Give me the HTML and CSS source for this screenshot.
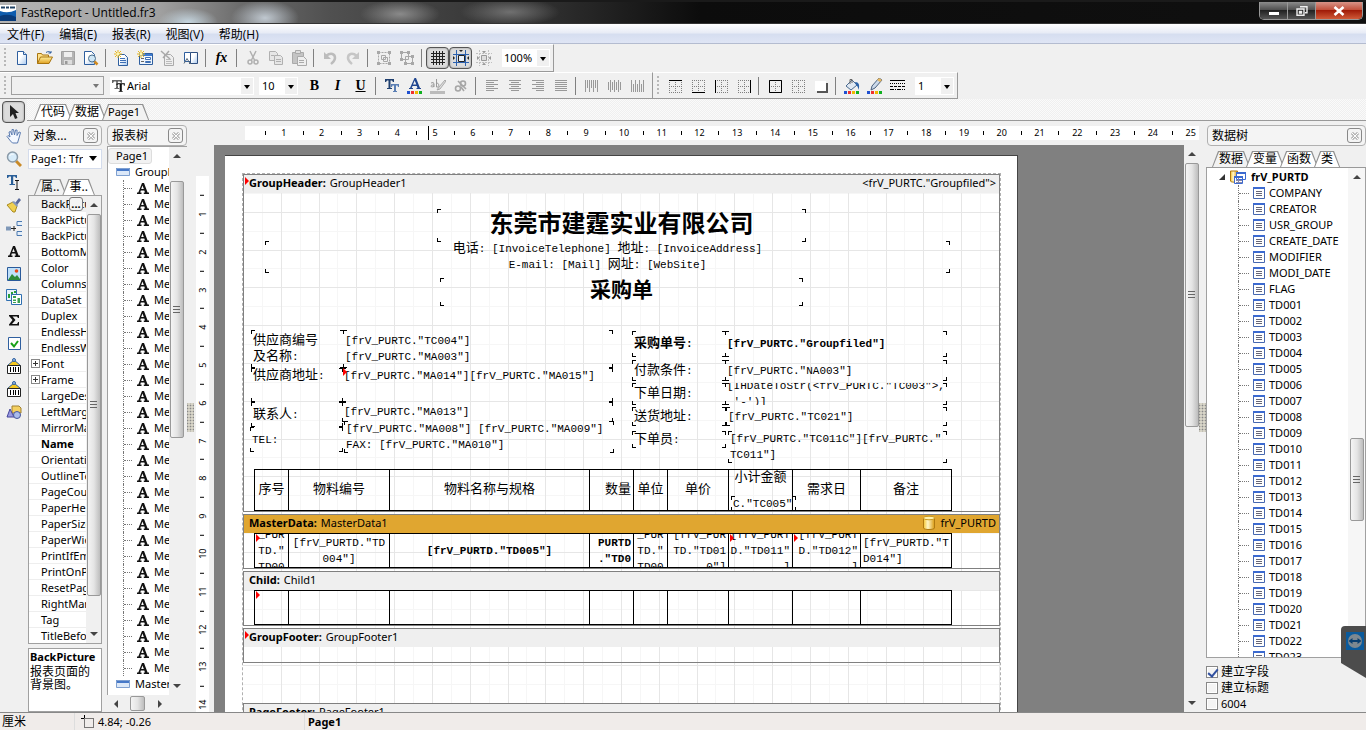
FILE: index.html
```html
<!DOCTYPE html>
<html lang="zh-CN">
  <head>
    <title>FastReport - Untitled.fr3</title>
    <meta charset="UTF-8" />
    <link rel="stylesheet" href="styles.css">
  </head>

  <body>
    <svg class="sprite" aria-hidden="true">
      <defs>
        <linearGradient id="gold" x1="0" y1="0" x2="0" y2="1">
          <stop offset="0" stop-color="#fff0a0" /><stop offset="1" stop-color="#e0a020" />
        </linearGradient>
        <linearGradient id="cyl" x1="0" y1="0" x2="1" y2="0">
          <stop offset="0" stop-color="#f4c430" /><stop offset="0.4" stop-color="#fff6c8" /><stop offset="1" stop-color="#d99a10" />
        </linearGradient>
        <linearGradient id="sheet" x1="0" y1="0" x2="1" y2="1">
          <stop offset="0.4" stop-color="#fff" /><stop offset="1" stop-color="#a8c8ee" />
        </linearGradient>
      </defs>
      <symbol id="i-new" viewBox="0 0 16 16"><path d="M3.500 1.500h6l3 3v10h-9z" fill="url(#sheet)" stroke="#2f5f9f" /><path d="M9.500 1.500v3h3" fill="#dce9f8" stroke="#2f5f9f" /></symbol>
      <symbol id="i-open" viewBox="0 0 16 16"><path d="M.5 13.500v-10h4l1 1.500h6v2" fill="#ffe28a" stroke="#a87410" /><path d="M.5 13.500l3-6.500h12l-3.500 6.500z" fill="url(#gold)" stroke="#a87410" /><path d="M9 2.500c2-1.500 4-1 5 .5v-2M14 3h-2.500" fill="none" stroke="#2f5f9f" /></symbol>
      <symbol id="i-save" viewBox="0 0 16 16"><path d="M1.500 1.500h13v13h-13z" fill="#b4b4b4" stroke="#a0a0a0" /><path d="M4 2h8v5H4z" fill="#eee" /><path d="M4 10h8v4.500H4z" fill="#ddd" /><path d="M5 11h2.500v3H5z" fill="#999" /></symbol>
      <symbol id="i-preview" viewBox="0 0 16 16"><path d="M1.500 1.500h7l3 3v10h-10z" fill="url(#sheet)" stroke="#2f5f9f" /><circle cx="9" cy="8.500" r="3.500" fill="#cfe6f5" stroke="#4c6f8c" /><path d="M11.500 11.500l3 3" stroke="#d08a20" stroke-width="2.500" /></symbol>
      <symbol id="i-addpage" viewBox="0 0 16 16"><path d="M4.500 4.500h6l3 3v8h-9z" fill="url(#sheet)" stroke="#2f5f9f" /><path d="M6 8.500h5M6 10.500h6M6 12.500h6" stroke="#3d6fb5" /><path d="M4 0v8M0 4h8M1 1l6 6M7 1L1 7" stroke="#e8b820" /><circle cx="4" cy="4" r="1.500" fill="#fff6b0" /></symbol>
      <symbol id="i-adddlg" viewBox="0 0 16 16"><path d="M2.500 3.500h13v11h-13z" fill="#eef4fb" stroke="#2f5f9f" /><path d="M3 4h12v2H3z" fill="#3d7bd0" /><path d="M4 8.500h3M4 11.500h3" stroke="#666" /><path d="M8.500 7.500h5v2h-5zM8.500 11.500h5v1h-5z" fill="#fff" stroke="#3d6fb5" /><path d="M4 0v8M0 4h8M1 1l6 6M7 1L1 7" stroke="#e8b820" /><circle cx="4" cy="4" r="1.500" fill="#fff6b0" /></symbol>
      <symbol id="i-delpage" viewBox="0 0 16 16"><path d="M4.500 4.500h6l3 3v8h-9z" fill="#eee" stroke="#aaa" /><path d="M6 9.500h5M6 11.500h6M6 13.500h6" stroke="#bbb" /><path d="M1 1l9 8M9 1L3 8" stroke="#a8a8a8" stroke-width="1.500" /></symbol>
      <symbol id="i-pageset" viewBox="0 0 16 16"><path d="M1.500 2.500h6v9h-6z" fill="#fff" stroke="#2f5f9f" /><path d="M7.500 2.500h7v11h-7z" fill="url(#sheet)" stroke="#2f4f7f" /><path d="M1 13.500l3-5 3 5M8 13.500h-2" fill="none" stroke="#567" /></symbol>
      <symbol id="i-cut" viewBox="0 0 16 16" fill="none" stroke="#b0b0b0" stroke-width="1.500"><path d="M5 1l4.500 9M11 1L6.500 10" /><circle cx="5" cy="12" r="2" /><circle cx="11" cy="12" r="2" /></symbol>
      <symbol id="i-copy" viewBox="0 0 16 16" fill="#e6e6e6" stroke="#b0b0b0"><path d="M1.500 1.500h6l2 2v7h-8z" /><path d="M6.500 5.500h6l2 2v7h-8z" /><path d="M8 9.500h5M8 11.500h5M3 5.500h3" /></symbol>
      <symbol id="i-paste" viewBox="0 0 16 16" fill="#c4c4c4" stroke="#aaa"><path d="M1.500 2.500h11v11h-11z" /><path d="M4.500.5h5v3h-5z" fill="#ddd" /><path d="M6.500 6.500h6l3 3v6h-9z" fill="#eee" /><path d="M8 10.500h5M8 12.500h5" /></symbol>
      <symbol id="i-undo" viewBox="0 0 16 16"><path d="M4 6c5-4 9-2 9 2 0 3-3 5-4 6" fill="none" stroke="#bcbcbc" stroke-width="2.500" /><path d="M2 2v7h7z" fill="#bcbcbc" /></symbol>
      <symbol id="i-redo" viewBox="0 0 16 16"><path d="M12 6C7 2 3 4 3 8c0 3 3 5 4 6" fill="none" stroke="#c6c6c6" stroke-width="2.500" /><path d="M14 2v7H7z" fill="#c6c6c6" /></symbol>
      <symbol id="i-group" viewBox="0 0 16 16" fill="none" stroke="#a8a8a8"><path d="M2.500 2.500h11v11h-11z" stroke-dasharray="2 1" /><path d="M5.500 5.500h4v4h-4zM7.500 7.500h4v4h-4z" /><path d="M1 1h3v3H1zM12 1h3v3h-3zM1 12h3v3H1zM12 12h3v3h-3z" fill="#a8a8a8" stroke="none" /></symbol>
      <symbol id="i-ungroup" viewBox="0 0 16 16" fill="none" stroke="#a8a8a8"><path d="M2.500 2.500h7v7h-7zM6.500 6.500h7v7h-7z" /><path d="M1 1h3v3H1zM8 1h3v3H8zM1 8h3v3H1zM12 5h3v3h-3zM5 12h3v3H5zM12 12h3v3h-3z" fill="#a8a8a8" stroke="none" /></symbol>
      <symbol id="i-grid" viewBox="0 0 16 16"><path d="M3.500 1v14M6.500 1v14M9.500 1v14M12.500 1v14M1 3.500h14M1 6.500h14M1 9.500h14M1 12.500h14" stroke="#222" /></symbol>
      <symbol id="i-snap" viewBox="0 0 16 16"><path d="M3.500 0v16M12.500 0v16M0 4.500h16M0 12.500h16" stroke="#2d62b0" /><path d="M5.500 5.500h6v6h-6z" fill="#e8f0fa" stroke="#222" /><path d="M6 0h4L8 2zM0 6v4l2-2zM16 6v4l-2-2z" fill="#222" /></symbol>
      <symbol id="i-fit" viewBox="0 0 16 16"><path d="M3.500 0v16M12.500 0v16M0 3.500h16M0 12.500h16" stroke="#c0c0c0" stroke-dasharray="2 1" /><path d="M5.500 5.500h5v5h-5z" fill="#ddd" stroke="#999" /><path d="M6 1h4L8 3.500zM6 15h4l-2-2.500zM1 6v4l2.500-2zM15 6v4l-2.500-2z" fill="#999" /></symbol>
      <symbol id="i-tt" viewBox="0 0 16 16"><path d="M1 2h10v3h-1l-1-1.500H7V10H8.500v1h-5v-1H5V3.500H3L2 5H1z" fill="#666" /><path d="M5 5h9v3h-1l-.5-1.500H11V13h1v1H7.500v-1h1V6.500H7L6 8H5z" fill="#111" stroke="#fff" stroke-width=".4" /></symbol>
      <symbol id="i-ttb" viewBox="0 0 16 16"><path d="M1 1h9v3H9L8 2.500H6.500V10H8v1H3v-1h1.500V2.500H3L2 4H1z" fill="#1f3f6f" /><path d="M7 6h8v3h-1l-.5-1.500H12V13h1v1H9v-1h1V7.500H8.500L8 9H7z" fill="#5b7fb4" /></symbol>
      <symbol id="i-colors" viewBox="0 0 16 4"><path d="M0 0h3v3H0z" fill="#2050d0" /><path d="M4 0h3v3H4z" fill="#f03030" /><path d="M8 0h3v3H8z" fill="#f0b800" /><path d="M12 0h3v3h-3z" fill="#10b020" /></symbol>
      <symbol id="i-fontcolor" viewBox="0 0 16 16"><path d="M7.500 0h1.500l4 10h1v1H9.500v-1h1L9.800 8H5.500l-.8 2H6v1H2v-1h1zM6 6.500h3.300L7.700 2.500z" fill="#1f4590" /><use href="#i-colors" x="0" y="13" width="16" height="4" /></symbol>
      <symbol id="i-hilite" viewBox="0 0 16 16"><path d="M0 13h15v3H0z" fill="#bbb" /><path d="M15 2l-6 7-2 3 3-1 6-8z" fill="#ddd" stroke="#aaa" /><path d="M1 5q3-1.500 3 1v3M4 7c-4-.5-4 3 0 1.500M6.500 1v8c3 1 3-5 0-3.500" fill="none" stroke="#999" /></symbol>
      <symbol id="i-rotate" viewBox="0 0 16 16" fill="none" stroke="#a6a6a6" stroke-width="1.600"><circle cx="5" cy="10.500" r="2.500" /><circle cx="10" cy="5.500" r="2.500" /><path d="M5 3l8 8M8 9l3 4" /></symbol>
      <symbol id="i-al" viewBox="0 0 16 16"><path d="M2 2.500h12M2 4.500h8M2 6.500h12M2 8.500h8M2 10.500h12M2 12.500h8" stroke="#999" /></symbol>
      <symbol id="i-ac" viewBox="0 0 16 16"><path d="M2 2.500h12M4 4.500h8M2 6.500h12M4 8.500h8M2 10.500h12M4 12.500h8" stroke="#999" /></symbol>
      <symbol id="i-ar" viewBox="0 0 16 16"><path d="M2 2.500h12M6 4.500h8M2 6.500h12M6 8.500h8M2 10.500h12M6 12.500h8" stroke="#999" /></symbol>
      <symbol id="i-aj" viewBox="0 0 16 16"><path d="M2 2.500h12M2 4.500h12M2 6.500h12M2 8.500h12M2 10.500h12M2 12.500h12" stroke="#999" /></symbol>
      <symbol id="i-vt" viewBox="0 0 16 16"><path d="M1.500 2v12M3.500 2v8M5.500 2v12M7.500 2v8M9.500 2v12M11.500 2v8M13.500 2v12" stroke="#999" /></symbol>
      <symbol id="i-vc" viewBox="0 0 16 16"><path d="M1.500 4v8M3.500 2v12M5.500 4v8M7.500 2v12M9.500 4v8M11.500 2v12M13.500 4v8" stroke="#999" /></symbol>
      <symbol id="i-vb" viewBox="0 0 16 16"><path d="M1.500 2v12M3.500 6v8M5.500 2v12M7.500 6v8M9.500 2v12M11.500 6v8M13.500 2v12" stroke="#999" /></symbol>
      <symbol id="i-dots" viewBox="0 0 16 16"><path d="M2 2.500h13M2 8.500h13M2 14.500h13M2.500 2v13M8.500 2v13M14.500 2v13" stroke="#808080" stroke-dasharray="1 1" /></symbol>
      <symbol id="i-ft" viewBox="0 0 16 16"><use href="#i-dots" width="16" height="16" /><path d="M2 2.500h13" stroke="#000" /></symbol>
      <symbol id="i-fb" viewBox="0 0 16 16"><use href="#i-dots" width="16" height="16" /><path d="M2 14.500h13" stroke="#000" /></symbol>
      <symbol id="i-fl" viewBox="0 0 16 16"><use href="#i-dots" width="16" height="16" /><path d="M2.500 2v13" stroke="#000" /></symbol>
      <symbol id="i-fr" viewBox="0 0 16 16"><use href="#i-dots" width="16" height="16" /><path d="M14.500 2v13" stroke="#000" /></symbol>
      <symbol id="i-fa" viewBox="0 0 16 16"><use href="#i-dots" width="16" height="16" /><path d="M2.500 2.500h12v12h-12z" fill="none" stroke="#000" /></symbol>
      <symbol id="i-shadow" viewBox="0 0 16 16"><path d="M4 5h11v10H4z" fill="#555" /><path d="M2 3h11v10H2z" fill="#fff" /></symbol>
      <symbol id="i-fill" viewBox="0 0 16 16"><path d="M2 8l6-6 5 5-6 5z" fill="#dfe8f2" stroke="#4a6a90" /><path d="M6 6V1.500h2V5" fill="none" stroke="#666" /><path d="M11 4c4 0 5 3 3.500 8C14 8 13 8 12 7z" fill="#2b62a8" /><use href="#i-colors" x="0" y="13" width="16" height="4" /></symbol>
      <symbol id="i-pen" viewBox="0 0 16 16"><path d="M12 0l3 2-7 8-4 2 1-4z" fill="#cbd9ea" stroke="#4a6080" /><path d="M12 0l3 2-2 2-3-2z" fill="#e8b860" /><use href="#i-colors" x="0" y="13" width="16" height="4" /></symbol>
      <symbol id="i-style" viewBox="0 0 16 16"><path d="M0 2.500h15" stroke="#000" /><path d="M0 5.500h15" stroke="#000" stroke-dasharray="1 1" /><path d="M0 8.500h15" stroke="#000" stroke-dasharray="3 1" /><path d="M0 11.500h15" stroke="#000" stroke-dasharray="4 1 1 1" /></symbol>
      <symbol id="i-arrow" viewBox="0 0 16 16"><path d="M4 1v12l3-3 2 5 2.500-1-2-5H13z" fill="#222" /></symbol>
      <symbol id="i-hand" viewBox="0 0 16 16"><path d="M4.500 13L1 8.500l1-1 2 1.500L3 4l1.500-.5L6 7V1.500h1.500L8.500 7l1-5L11 2v5.500l2-3.500 1.500.5L13 10l-1.500 5h-5z" fill="#f4f8ff" stroke="#5b7bb0" /></symbol>
      <symbol id="i-zoom" viewBox="0 0 16 16"><path d="M10 10l5 5" stroke="#c98a28" stroke-width="3" /><circle cx="6.500" cy="6" r="5" fill="#d8ecfa" stroke="#8a9aa8" stroke-width="1.500" /><path d="M3.500 5c1-2 3-2 4-1.500" stroke="#fff" fill="none" /></symbol>
      <symbol id="i-text" viewBox="0 0 16 16"><path d="M1 1h10v3h-1L9 2.500H7.200V10H9v1H3.500v-1H5V2.500H3L2 4H1z" fill="#2a5f98" /><path d="M9 6.500h4M11 7v8M9 15.500h4" stroke="#111" /></symbol>
      <symbol id="i-brush" viewBox="0 0 16 16"><path d="M9 6l4-5 2 2-4 5z" fill="#5a6a9a" /><path d="M1 8l6-3 4 4-2 6H7z" fill="#f0d050" stroke="#a88a20" /><path d="M6 5l2-1 4 4-1 2z" fill="#8898b8" /></symbol>
      <symbol id="i-link" viewBox="0 0 16 16"><path d="M0 6.500h5v4H0z" fill="#7f98b8" /><path d="M5 8.500h5M8 6v5" stroke="#222" /><path d="M16 1.500h-5v4h5M16 11.500h-5v4h5" fill="#e4eef8" stroke="#4a78b0" /></symbol>
      <symbol id="i-a" viewBox="0 0 16 16"><path d="M7 3h2l3.600 9.500H14V14H8.800v-1.500H10L9.300 10.500H5.800l-.6 2H6.500V14H2v-1.500h1.300zM6.200 9h2.600L7.500 5.500z" fill="#111" /></symbol>
      <symbol id="i-pic" viewBox="0 0 16 16"><path d="M1.500 1.500h13v13h-13z" fill="#bfe0fa" stroke="#2a5a9a" /><path d="M2 14l4-6 3 3 2-2 3 4v1z" fill="#2e8b3a" /><circle cx="10.500" cy="5" r="1.800" fill="#e84818" /></symbol>
      <symbol id="i-sub" viewBox="0 0 16 16"><path d="M.5.500h10v11H.5z" fill="#e8f2fc" stroke="#2f6fb0" /><path d="M2 5h2v4H2zM5 3h2v6H5zM8 2h2v2H8z" fill="#28a038" /><path d="M5.500 5.500h10v10h-10z" fill="#fff" stroke="#2f6fb0" /><path d="M7 7h3v2H7zM7 10.500h3v1.500H7zM7 13h3v1H7zM11.500 9h2.500v5h-2.500z" fill="#3ca050" /></symbol>
      <symbol id="i-sigma" viewBox="0 0 16 16"><path d="M3 3h10v3h-1l-1-1.500H6.500L9.500 8l-3.500 4h5l1.200-2H13v3.500H3V12.500L6.500 8 3 4z" fill="#111" /></symbol>
      <symbol id="i-check" viewBox="0 0 16 16"><path d="M2.500 2.500h12v12h-12z" fill="#fff" stroke="#2f5f9f" /><path d="M5 8l3 3.500L12 6" fill="none" stroke="#18a018" stroke-width="2" /></symbol>
      <symbol id="i-bar" viewBox="0 0 16 16"><path d="M1.500 7.500L8 2l6.500 5.500z" fill="#f5c820" stroke="#2f5f9f" /><path d="M1.500 7.500h13v8h-13z" fill="#fff" stroke="#222" /><path d="M4.500 9v5M7.500 9v5M9.500 9v5M12.500 9v5" stroke="#000" /><circle cx="8" cy="2" r="1.500" fill="#9cc0ea" stroke="#2f5f9f" /></symbol>
      <symbol id="i-shapes" viewBox="0 0 16 16"><path d="M6 2h7l2 2v5H6z" fill="#f4d060" stroke="#a08030" /><path d="M1 13l3-8 4 8z" fill="#9a9ae0" stroke="#44449a" /><circle cx="11" cy="11" r="3.500" fill="#aabcec" stroke="#44559a" /></symbol>
      <symbol id="i-band" viewBox="0 0 16 16"><path d="M1 4h14v8H1z" fill="#dce8f8" /><path d="M1 4h14v3H1z" fill="#4678c8" /><path d="M1.500 4.500h13v7h-13z" fill="none" stroke="#7fa0d0" /></symbol>
      <symbol id="i-field" viewBox="0 0 16 16"><path d="M2.500 2.500h11v11h-11z" fill="#fff" stroke="#4668b0" /><path d="M2 2h12v2H2z" fill="#3c6ad0" /><path d="M5 6.500h6M5 8.500h6M5 10.500h6" stroke="#667" /></symbol>
      <symbol id="i-db" viewBox="0 0 16 16"><path d="M2.500 3v10c0 2 11 2 11 0V3z" fill="url(#cyl)" stroke="#b07a10" /><ellipse cx="8" cy="3" rx="5.500" ry="1.800" fill="#fff2b0" stroke="#c89a20" /></symbol>
      <symbol id="i-dataset" viewBox="0 0 16 16"><path d="M.5 2v10c0 1.500 7 1.500 7 0V2z" fill="url(#cyl)" stroke="#b07a10" /><path d="M6.500 3.500h9v7h-9zM4.500 7.500h8v7h-8z" fill="#fff" stroke="#3c6ad0" /><path d="M6 3h10v2H6zM4 7h9v2H4z" fill="#3c6ad0" /><path d="M6 11.500h6M6 13.500h6M8.500 9v5" stroke="#88a" /></symbol>
      <symbol id="i-pos" viewBox="0 0 16 16"><path d="M4.500 4.500h9v9h-9z" fill="none" stroke="#000" stroke-dasharray="1 1" /><path d="M4.500 1v3M1 4.500h3" stroke="#000" /></symbol>
      <symbol id="i-close" viewBox="0 0 16 16"><path d="M4 4l8 8M12 4l-8 8" stroke="#888" stroke-width="3.500" /><path d="M4 4l8 8M12 4l-8 8" stroke="#fff" stroke-width="1.500" /></symbol>
    </svg>

    <header class="titleBar">
      <svg class="appIcon" viewBox="0 0 16 16"><path d="M0 0h16v16H0z" fill="#fff" /><path d="M0 6q8 3 16-1v11H0z" fill="#0e5cae" /><path d="M0 11q8-3 16 1v4H0z" fill="#093a78" /><path d="M1 2.500h4M6 2.500h3M10 2.500h5" stroke="#246" stroke-width="2" /></svg>
      <h1>FastReport - Untitled.fr3</h1>
      <div class="winButtons">
        <button class="minimize" aria-label="Minimize"><svg viewBox="0 0 12 10"><path d="M1 6h10v3H1z" fill="#fff" /></svg></button>
        <button class="restore" aria-label="Restore"><svg viewBox="0 0 12 10"><path d="M4 .8h7v6H9M1 3h7v6.200H1zM3.500 5.500h2v1.500h-2z" fill="none" stroke="#eee" stroke-width="1.400" /></svg></button>
        <button class="closeWin" aria-label="Close"><svg viewBox="0 0 12 10"><path d="M1.500 1l9 8M10.500 1l-9 8" stroke="#fff" stroke-width="2.600" /></svg></button>
      </div>
    </header>

    <nav class="menuBar">
      <button>文件(F)</button>
      <button>编辑(E)</button>
      <button>报表(R)</button>
      <button>视图(V)</button>
      <button>帮助(H)</button>
    </nav>

    <div class="toolRows">
      <div class="toolRow">
        <div class="toolBar" data-icons="new open save preview | addpage adddlg delpage pageset | fx | cut copy paste | undo redo | group ungroup | grid* snap* fit">
          <label class="combo zoomBox"><select aria-label="Zoom"><option>100%</option></select></label>
        </div>
      </div>
      <div class="toolRow">
        <div class="toolBar textBar">
          <label class="combo styleBox"><select aria-label="Style" disabled><option></option></select></label>
          <label class="combo font"><svg><use href="#i-tt" /></svg><select aria-label="Font"><option>Arial</option></select></label>
          <label class="combo size"><select aria-label="Size"><option>10</option></select></label>
          <div class="icons" data-icons="bold italic underline | ttb fontcolor hilite rotate | al ac ar aj | vt vc vb"></div>
        </div>
        <div class="toolBar" data-icons="ft fb fl fr | fa dots shadow | fill pen style">
          <label class="combo size"><select aria-label="Line width"><option>1</option></select></label>
        </div>
      </div>
    </div>

    <div class="workspace">
      <div class="objectBar" data-icons="arrow* hand zoom text brush link a pic sub sigma check bar bar shapes"></div>

      <div class="main">
        <div class="tabs pageTabs">
          <button class="tab">代码</button>
          <button class="tab">数据</button>
          <button class="tab active">Page1</button>
        </div>

        <div class="panels">
          <section class="panel inspector">
            <h2>对象...<button class="closePanel" aria-label="Close"><svg><use href="#i-close" /></svg></button></h2>
            <label class="combo object"><select aria-label="Object"><option>Page1: TfrxReportPage</option></select></label>
            <div class="tabs">
              <button class="tab active">属..</button>
              <button class="tab">事..</button>
            </div>
            <div class="listBox">
              <ul class="props"></ul>
              <div class="scroll"><i class="up"></i><i class="thumb"></i><i class="down"></i></div>
            </div>
            <div class="hint"><b>BackPicture</b><p>报表页面的背景图。</p></div>
          </section>

          <section class="panel reportTree">
            <h2>报表树<button class="closePanel" aria-label="Close"><svg><use href="#i-close" /></svg></button></h2>
            <div class="listBox">
              <ul class="tree"></ul>
              <div class="scroll"><i class="up"></i><i class="thumb"></i><i class="down"></i></div>
            </div>
            <div class="scroll across"><i class="left"></i><i class="thumb"></i><i class="right"></i></div>
          </section>

          <div class="splitter"></div>

          <section class="designer">
            <div class="ruler hRuler"><i class="mark"></i></div>
            <div class="designRow">
              <div class="ruler vRuler"></div>
              <div class="canvas">
                <div class="page">
                  <div class="pageBody">
                    <svg class="pageGrid"></svg>
                    <div class="band groupHeader"><h3><b>GroupHeader:</b> GroupHeader1<span>&lt;frV_PURTC."Groupfiled"&gt;</span></h3></div>
                    <div class="band masterData"><h3><b>MasterData:</b> MasterData1<span><svg><use href="#i-db" /></svg>frV_PURTD</span></h3></div>
                    <div class="band child"><h3><b>Child:</b> Child1</h3></div>
                    <div class="band groupFooter"><h3><b>GroupFooter:</b> GroupFooter1</h3></div>
                    <div class="band pageFooter"><h3><b>PageFooter:</b> PageFooter1</h3></div>
                  </div>
                </div>
              </div>
              <div class="scroll"><i class="up"></i><i class="thumb"></i><i class="down"></i></div>
            </div>
          </section>

          <div class="splitter"></div>

          <section class="panel dataTree">
            <h2>数据树<button class="closePanel" aria-label="Close"><svg><use href="#i-close" /></svg></button></h2>
            <div class="tabs">
              <button class="tab active">数据</button>
              <button class="tab">变量</button>
              <button class="tab">函数</button>
              <button class="tab">类</button>
            </div>
            <div class="listBox">
              <ul class="tree fields"></ul>
              <div class="scroll"><i class="up"></i><i class="thumb"></i><i class="down"></i></div>
            </div>
            <div class="options">
              <label><input type="checkbox" checked>建立字段</label>
              <label><input type="checkbox">建立标题</label>
              <label><input type="checkbox">6004</label>
            </div>
            <div class="sideBadge"><svg viewBox="0 0 18 18"><path d="M0 0h18v18H0z" fill="#0a5a9c" /><circle cx="9" cy="9" r="7" fill="#7d8890" /><path d="M2.500 9l4-3v2h5V6l4 3-4 3v-2h-5v2z" fill="#0a3f70" /></svg></div>
          </section>
        </div>
      </div>
    </div>

    <footer class="statusBar">
      <span class="unit">厘米</span>
      <span class="pos"><svg><use href="#i-pos" /></svg>4.84; -0.26</span>
      <b>Page1</b>
    </footer>

    <script src="script.js"></script>
  </body>
</html>
```
FILE: styles.css
```css
* {
  box-sizing: border-box;
  margin: 0;
  padding: 0;
}

body {
  display: flex;
  flex-direction: column;
  height: 100vh;
  overflow: hidden;
  background: #f0f0f0;
  color: #000;
  font-family: "Noto Sans", "Noto Sans CJK SC", sans-serif;
  font-size: 11px;
  line-height: 16px;
}

button,
select,
input {
  font: inherit;
  color: inherit;
}

button {
  border: none;
  background: none;
}

ul {
  list-style: none;
}

svg {
  display: block;
  flex: none;
  width: 16px;
  height: 16px;
}

.sprite {
  position: absolute;
  width: 0;
  height: 0;
}

/* title and menu */

.titleBar {
  display: flex;
  align-items: center;
  flex: none;
  height: 24px;
  border-top: 2px solid #1a1a1a;
  border-bottom: 1px solid #333;
  background:
    radial-gradient(ellipse 30px 14px at 188px 20px, #c4d4de, transparent),
    radial-gradient(ellipse 34px 18px at 265px 16px, #c0c8d0, transparent),
    radial-gradient(ellipse 40px 14px at 400px 12px, #8a8a8a, transparent),
    radial-gradient(ellipse 50px 14px at 510px 10px, #707070, transparent),
    linear-gradient(to right, #b4b4b4 0, #a0a0a0 160px, #6c6c6c 240px, #505050 330px, #2c2c2c 560px, #0c0c0c 700px, #101010 100%);
}

.titleBar h1 {
  flex: 1;
  margin-left: 5px;
  font-size: 12px;
  font-weight: normal;
  font-family: "Open Sans", sans-serif;
}

.winButtons {
  display: flex;
  align-self: flex-start;
  height: 18px;
  margin-right: 3px;
  border: 1px solid #999;
  border-top: none;
  border-radius: 0 0 5px 5px;
  overflow: hidden;
}

.winButtons button {
  display: flex;
  align-items: center;
  justify-content: center;
  width: 28px;
  border-right: 1px solid #999;
  background: linear-gradient(#8c8c8c, #4a4a4a 50%, #222 50%, #555);
}

.winButtons svg {
  width: 12px;
  height: 10px;
}

.winButtons .closeWin {
  width: 46px;
  border-right: none;
  background: linear-gradient(#d89488, #c04a34 50%, #a01c08 50%, #d05a38);
}

.menuBar {
  display: flex;
  flex: none;
  height: 20px;
  gap: 15px;
  padding: 2px 0 0 7px;
  border-bottom: 1px solid #b4bcd0;
  background: linear-gradient(#fff, #e8ecf6 45%, #d6def0 55%, #dfe5f5);
  font-family: "Open Sans", "Noto Sans CJK SC", sans-serif;
  font-size: 12px;
}

/* tool bars */

.toolRows {
  flex: none;
}

.toolRow {
  display: flex;
  height: 27px;
}

.toolRow:first-child {
  height: 28px;
}

.toolBar {
  display: flex;
  align-items: center;
  padding: 0 3px 0 10px;
  border-top: 1px solid #fff;
  border-right: 1px solid #999;
  border-bottom: 1px solid #999;
  position: relative;
}

.toolBar::before {
  content: "";
  position: absolute;
  left: 4px;
  top: 3px;
  bottom: 3px;
  width: 2px;
  background: repeating-linear-gradient(#b8b8b8 0 2px, transparent 2px 4px);
}

.icons {
  display: flex;
  align-items: center;
}

.tool {
  display: flex;
  align-items: center;
  justify-content: center;
  flex: none;
  width: 23px;
  height: 22px;
  font: bold 14px/20px "Liberation Serif", serif;
}

.tool.pressed {
  border: 1px solid #555;
  border-radius: 4px;
  background: #dcdcdc;
  box-shadow: inset 0 0 2px #888;
}

.tool.slanted {
  font-style: italic;
}

.tool.underlined {
  text-decoration: underline;
}

.sep {
  flex: none;
  width: 1px;
  height: 18px;
  margin: 0 4px 0 3px;
  background: #808080;
}

.combo {
  display: flex;
  align-items: center;
  position: relative;
  height: 18px;
  background: #fff;
}

.combo select {
  flex: 1;
  min-width: 0;
  height: 18px;
  padding: 0 12px 0 3px;
  border: none;
  background: none;
  appearance: none;
}

.combo::after {
  content: "";
  position: absolute;
  right: 4px;
  top: 8px;
  border: 3px solid transparent;
  border-top: 4px solid #000;
  border-bottom: none;
}

.toolBar .combo::before {
  content: "";
  position: absolute;
  right: 1px;
  top: 1px;
  bottom: 1px;
  width: 12px;
  background: #f0f0f0;
}

.combo.zoomBox {
  width: 48px;
  margin-left: 7px;
}

.combo.zoomBox select {
  padding-left: 2px;
}

.combo.styleBox {
  width: 93px;
  height: 19px;
  margin-left: 1px;
  border: 1px solid #a0a0a0;
  background: #f0f0f0;
}

.combo.styleBox::after {
  top: 7px;
  border-top-color: #777;
}

.combo.font {
  width: 144px;
  margin: 0 5px 0 6px;
  padding-left: 1px;
}

.combo.font select {
  padding-left: 0;
}

.combo.size {
  width: 39px;
  margin-right: 5px;
}

.combo.size:last-child {
  margin: 0 0 0 6px;
}

/* workspace */

.workspace {
  display: flex;
  flex: 1;
  min-height: 0;
}

.objectBar {
  flex: none;
  width: 27px;
  padding: 2px 2px 0;
}

.objectBar .tool {
  height: 23px;
}

.objectBar .tool.pressed {
  height: 22px;
  margin-bottom: 1px;
}

.main {
  display: flex;
  flex-direction: column;
  flex: 1;
  min-width: 0;
}

.tabs {
  display: flex;
  align-items: flex-end;
  flex: none;
  height: 17px;
  padding-left: 6px;
  border-bottom: 1px solid #999;
  font-size: 12px;
}

.pageTabs {
  height: 22px;
  padding-left: 7px;
  background: repeating-conic-gradient(#efefef 0 25%, #fafafa 0 50%) 0 0 / 2px 2px;
}

.tab {
  flex: none;
  position: relative;
  isolation: isolate;
  height: 16px;
  margin-right: -4px;
  padding: 0 7px;
  background: #909090;
  clip-path: polygon(0 100%, 6px 0, calc(100% - 6px) 0, 100% 100%);
  line-height: 16px;
}

.tab::before {
  content: "";
  position: absolute;
  inset: 1px 1px 0;
  z-index: -1;
  background: #fff;
  clip-path: polygon(0 100%, 6px 0, calc(100% - 6px) 0, 100% 100%);
}

.tab.active::before {
  background: #f2f2f2;
}

.pageTabs .active {
  padding: 0 9px 0 6px;
  font-size: 11px;
}

.panels {
  display: grid;
  grid-template-columns: 75px 85px 7px 1fr 7px 160px;
  grid-template-rows: minmax(0, 1fr);
  flex: 1;
  min-height: 0;
}

.panel {
  display: flex;
  flex-direction: column;
  min-width: 0;
  min-height: 0;
  padding-top: 4px;
}

.panel h2 {
  display: flex;
  align-items: center;
  justify-content: space-between;
  flex: none;
  height: 21px;
  padding: 0 3px 0 4px;
  border: 1px solid #b0b0b0;
  border-radius: 4px;
  background: #f4f4f4;
  font-size: 12px;
  font-weight: normal;
}

.closePanel {
  display: flex;
  align-items: center;
  justify-content: center;
  width: 15px;
  height: 15px;
  border: 1px solid #888;
  border-radius: 3px;
}

.closePanel svg {
  width: 12px;
  height: 12px;
}

.listBox {
  display: flex;
  flex: 1;
  min-height: 0;
  overflow: hidden;
  border: 1px solid #a0a0a0;
  background: #fff;
}

.listBox ul {
  flex: 1;
  min-width: 0;
  overflow: hidden;
}

/* scroll bars */

.scroll {
  display: flex;
  flex-direction: column;
  align-items: center;
  flex: none;
  width: 15px;
  padding: 7px 0;
  background: #f0f0f0;
}

.scroll i {
  flex: none;
}

.up,
.down {
  border: 4px solid transparent;
}

.up {
  border-top: none;
  border-bottom: 4px solid #444;
}

.down {
  margin-top: auto;
  border-bottom: none;
  border-top: 4px solid #444;
}

.thumb {
  display: flex;
  align-items: center;
  justify-content: center;
  width: 14px;
  height: 382px;
  margin-top: 7px;
  border: 1px solid #999;
  border-radius: 2px;
  background: linear-gradient(to right, #f4f4f4, #e4e4e4 50%, #bdbdbd);
}

.thumb::before {
  content: "";
  width: 7px;
  height: 8px;
  background: repeating-linear-gradient(#666 0 1px, transparent 1px 3px);
}

.scroll.across {
  flex-direction: row;
  width: 62px;
  height: 17px;
  padding: 0 7px;
}

.left,
.right {
  border: 4px solid transparent;
}

.left {
  border-left: none;
  border-right: 4px solid #444;
}

.right {
  margin-left: auto;
  border-right: none;
  border-left: 4px solid #444;
}

.across .thumb {
  width: 15px;
  height: 15px;
  margin: 0 0 0 12px;
}

.across .thumb::before {
  display: none;
}

/* object inspector */

.inspector {
  padding-left: 1px;
}

.combo.object {
  flex: none;
  height: 20px;
  margin: 3px 0 9px;
  border: 1px solid #d4dcec;
}

.combo.object select {
  padding: 0 18px 0 2px;
  text-overflow: clip;
}

.combo.object::after {
  top: 6px;
  border-width: 5px 4px 0;
}

.inspector .listBox {
  flex: 0 1 449px;
}

.inspector .tabs {
  border-bottom: none;
}

.props li {
  display: flex;
  align-items: center;
  position: relative;
  height: 16px;
  padding-left: 12px;
  border-bottom: 1px solid #eee;
  white-space: nowrap;
  line-height: 15px;
}

.props .selected {
  background: #f0f0f0;
}

.props .set {
  font-weight: bold;
}

.props .dots {
  position: absolute;
  right: 3px;
  top: 1px;
  width: 14px;
  height: 14px;
  border: 1px solid #777;
  border-radius: 3px;
  background: #f4f4f4;
  font-weight: bold;
  line-height: 8px;
}

.plus {
  position: absolute;
  left: 2px;
  width: 9px;
  height: 9px;
  border: 1px solid #888;
  background:
    linear-gradient(#333 0 0) center / 5px 1px no-repeat,
    linear-gradient(#333 0 0) center / 1px 5px no-repeat;
}

.hint {
  flex: 1;
  margin-top: 4px;
  padding: 0 1px;
  border: 1px solid #a0a0a0;
  background: #fff;
}

.hint p {
  width: 64px;
  font-size: 12px;
  line-height: 13px;
}

/* trees */

.tree {
  padding-top: 1px;
}

.tree li {
  display: flex;
  align-items: center;
  height: 16px;
  white-space: nowrap;
}

.reportTree {
  margin-left: 5px;
}

.reportTree .listBox {
  border-right: none;
  border-bottom: none;
}

.reportTree .listBox .scroll {
  width: 18px;
  padding-right: 3px;
}

.reportTree .tree .root {
  width: 44px;
  padding-left: 7px;
  border: 1px solid #ddd;
  border-radius: 3px;
  background: #f2f2f2;
}

.tree .group {
  gap: 4px;
  padding-left: 7px;
}

.tree .leaf {
  gap: 3px;
  margin-left: 15px;
  border-left: 1px dotted #777;
}

.tree .leaf::before {
  content: "";
  flex: none;
  width: 8px;
  border-top: 1px dotted #777;
}

.fields .group {
  gap: 5px;
  padding-left: 12px;
  font-weight: bold;
}

.fields .leaf {
  gap: 2px;
  margin-left: 31px;
}

.fields .leaf::before {
  width: 10px;
}

.twist {
  border-left: 6px solid transparent;
  border-bottom: 6px solid #333;
}

.reportTree .listBox .thumb {
  height: 257px;
  margin-top: 23px;
}

.splitter {
  align-self: start;
  height: 29px;
  margin-top: 282px;
  background: radial-gradient(circle, #888 40%, transparent 50%) center / 3px 3px, #d8d5c8;
}

.dataTree {
  position: relative;
}

.dataTree h2 {
  margin-left: 1px;
}

.dataTree .tabs {
  margin-top: 5px;
}

.dataTree .listBox {
  border-top: none;
}

.dataTree .scroll {
  width: 17px;
  background: #f6f6f6;
}

.dataTree .thumb {
  height: 83px;
  margin-top: 259px;
}

.options {
  flex: none;
  padding-top: 6px;
}

.options label {
  display: flex;
  align-items: center;
  gap: 3px;
  height: 16px;
  font-size: 12px;
}

.options input {
  appearance: none;
  width: 12px;
  height: 12px;
  border: 1px solid #888;
  background: #f4f4f4;
  box-shadow: inset 0 0 0 1px #fff;
}

.options input:checked::before {
  content: "";
  display: block;
  width: 4px;
  height: 8px;
  margin: 0 3px;
  border: solid #3050a0;
  border-width: 0 2px 2px 0;
  transform: rotate(40deg);
}

.options label:last-child {
  font-size: 11px;
}

.sideBadge {
  position: absolute;
  right: 0;
  bottom: 34px;
  width: 25px;
  height: 52px;
  padding: 6px 0 0 5px;
  border-radius: 4px 0 0 0;
  background: #4c4c4c;
  clip-path: polygon(0 0, 100% 0, 100% 100%, 0 37px);
}

.sideBadge svg {
  width: 18px;
  height: 18px;
}

/* designer */

.designer {
  display: flex;
  flex-direction: column;
  min-width: 0;
  min-height: 0;
  padding-top: 5px;
}

.ruler {
  display: flex;
  flex: none;
  overflow: hidden;
  background: #fff;
  font-size: 9px;
}

.ruler span {
  flex: none;
  text-align: center;
}

.hRuler {
  position: relative;
  height: 14px;
  margin: 0 0 5px 51px;
  padding-left: 20px;
  line-height: 14px;
}

.hRuler span {
  width: 1cm;
  background: linear-gradient(#000 0 0) 0 center / 1px 4px no-repeat;
}

.mark {
  position: absolute;
  left: 183px;
  width: 1px;
  height: 14px;
  background: #000;
}

.vRuler {
  flex-direction: column;
  width: 13px;
  margin: 31px 5px 0 2px;
  padding-top: 19px;
}

.vRuler span {
  width: 13px;
  height: 1cm;
  line-height: 13px;
  writing-mode: vertical-rl;
  transform: rotate(180deg);
  background: linear-gradient(#000 0 0) center bottom / 4px 1px no-repeat;
}

.designRow {
  display: flex;
  flex: 1;
  min-height: 0;
}

.canvas {
  flex: 1;
  min-width: 0;
  overflow: hidden;
  padding: 10px 11px 0;
  background: #808080;
}

.designRow .thumb {
  height: 264px;
}

.page {
  width: 793px;
  min-height: 800px;
  padding: 18px;
  border-top: 1px solid #444;
  border-right: 1px solid #444;
  background: #fff;
}

.pageBody {
  position: relative;
  width: 757px;
  min-height: 700px;
  outline: 1px dashed #b0b0b0;
}

.pageGrid {
  position: absolute;
  width: 757px;
  height: 700px;
}

.band {
  position: relative;
  height: 55px;
  margin-bottom: 2px;
  border: 1px solid #808080;
}

.band h3 {
  display: flex;
  gap: 4px;
  height: 18px;
  padding: 0 3px 0 5px;
  background: #efefef;
  font-size: 11px;
  font-weight: normal;
}

.band h3 span {
  display: flex;
  gap: 4px;
  margin-left: auto;
}

.groupHeader {
  height: 338px;
}

.masterData h3 {
  background: #e0a630;
}

.groupFooter {
  height: 35px;
  margin-bottom: 40px;
}

.groupHeader::before,
.groupFooter::before,
.memo.flag::before {
  content: "";
  position: absolute;
  left: 1px;
  top: 2px;
  border: 4px solid transparent;
  border-left: 4px solid #f00;
  border-right: none;
}

.memo.flag::before {
  top: 0;
}

.memo {
  position: absolute;
  display: flex;
  align-items: center;
  overflow: hidden;
  padding: 0 2px;
  font: 11px/16px "Liberation Mono", "Noto Sans CJK SC", monospace;
  white-space: pre;
  --ink: linear-gradient(#000 0 0);
}

.memo.corners {
  background:
    var(--ink) 0 0 / 4px 1px, var(--ink) 0 0 / 1px 4px,
    var(--ink) 100% 0 / 4px 1px, var(--ink) 100% 0 / 1px 4px,
    var(--ink) 0 100% / 4px 1px, var(--ink) 0 100% / 1px 4px,
    var(--ink) 100% 100% / 4px 1px, var(--ink) 100% 100% / 1px 4px;
  background-repeat: no-repeat;
}

.memo.frame {
  border: 1px solid #000;
}

.memo.center {
  justify-content: center;
  text-align: center;
}

.memo.end {
  justify-content: flex-end;
  text-align: right;
}

.memo.top {
  align-items: flex-start;
}

.memo.bold {
  font-weight: bold;
}

.memo .han {
  font-size: 13px;
  line-height: 0;
}

.memo.company,
.memo.company .han {
  font-size: 24px;
}

.memo.title,
.memo.title .han {
  font-size: 21px;
}

/* status bar */

.statusBar {
  display: flex;
  flex: none;
  height: 18px;
  border-top: 1px solid #888;
  background: #f0ecea;
  line-height: 18px;
}

.unit {
  width: 75px;
  padding-left: 2px;
  border-right: 1px solid #ddd;
  font-size: 12px;
}

.pos {
  display: flex;
  align-items: center;
  gap: 2px;
  width: 230px;
  padding-left: 5px;
  border-right: 1px solid #ddd;
}

.statusBar b {
  padding-left: 3px;
}
```
FILE: script.js
```js
(function () {
  const letters = { fx: "fx", bold: "B", italic: "I", underline: "U" };
  const looks = { fx: "slanted", italic: "slanted", underline: "underlined" };

  function icon(name) {
    return `<svg><use href="#i-${name}" /></svg>`;
  }

  // "name*" is a pressed button, "|" a separator
  document.querySelectorAll("[data-icons]").forEach(function (bar) {
    const html = bar.dataset.icons.split(" ").map(function (item) {
      if (item === "|") return '<span class="sep"></span>';
      const name = item.replace("*", "");
      const look = item.endsWith("*") ? "pressed" : looks[name] || "";
      return `<button class="tool ${look}" aria-label="${name}">${letters[name] || icon(name)}</button>`;
    });
    bar.insertAdjacentHTML("afterbegin", html.join(""));
  });

  const props = [
    "BackPicture", "BackPicturePrintable", "BackPictureStretched", "BottomMargin",
    "Color", "Columns", "DataSet", "Duplex", "EndlessHeight", "EndlessWidth",
    "Font", "Frame", "LargeDesignHeight", "LeftMargin", "MirrorMargins", "Name",
    "Orientation", "OutlineText", "PageCount", "PaperHeight", "PaperSize",
    "PaperWidth", "PrintIfEmpty", "PrintOnPreviousPage", "ResetPageNumbers",
    "RightMargin", "Tag", "TitleBeforeHeader",
  ];
  document.querySelector(".props").innerHTML = props.map(function (name, i) {
    if (i === 0) return `<li class="selected">${name}<button class="dots">...</button></li>`;
    if (name === "Name") return `<li class="set">${name}</li>`;
    const plus = name === "Font" || name === "Frame" ? '<i class="plus"></i>' : "";
    return `<li>${plus}${name}</li>`;
  }).join("");

  let tree = '<li class="root">Page1</li>';
  tree += `<li class="group">${icon("band")}GroupHeader1</li>`;
  for (let i = 1; i <= 31; i++) {
    tree += `<li class="leaf">${icon("a")}Memo${i}</li>`;
  }
  tree += `<li class="group">${icon("band")}MasterData1</li>`;
  document.querySelector(".reportTree .tree").innerHTML = tree;

  const fields = ["COMPANY", "CREATOR", "USR_GROUP", "CREATE_DATE", "MODIFIER", "MODI_DATE", "FLAG"];
  for (let i = 1; i <= 23; i++) {
    fields.push("TD" + String(i).padStart(3, "0"));
  }
  document.querySelector(".fields").innerHTML =
    `<li class="group"><i class="twist"></i>${icon("dataset")}frV_PURTD</li>` +
    fields.map((name) => `<li class="leaf">${icon("field")}${name}</li>`).join("");

  function fillRuler(selector, count) {
    let html = "";
    for (let i = 1; i <= count; i++) html += `<span>${i}</span>`;
    document.querySelector(selector).insertAdjacentHTML("beforeend", html);
  }
  fillRuler(".hRuler", 25);
  fillRuler(".vRuler", 14);

  // one centimetre grid with lighter half steps
  const cm = 96 / 2.54;
  let major = "";
  let minor = "";
  for (let i = 1; i <= 40; i++) {
    const p = Math.round((i * cm) / 2) + 0.5;
    const d = `M${p} 0V700M0 ${p}H757`;
    if (i % 2) minor += d;
    else major += d;
  }
  document.querySelector(".pageGrid").innerHTML =
    `<path d="${minor}" stroke="#f6f6f6" /><path d="${major}" stroke="#e6e6e6" />`;

  // [left, top, width, height, classes, text], measured from the band's corner
  const header = [
    [193, 34, 369, 33, "corners center bold company", "东莞市建霆实业有限公司"],
    [21, 66, 685, 32, "corners center", "电话: [InvoiceTelephone] 地址: [InvoiceAddress]\nE-mail: [Mail] 网址: [WebSite]"],
    [196, 103, 363, 28, "corners center bold title", "采购单"],
    [7, 155, 93, 38, "corners", "供应商编号\n及名称:"],
    [7, 193, 92, 34, "corners top", "供应商地址:"],
    [7, 227, 92, 25, "corners", "联系人:"],
    [6, 252, 93, 25, "corners", "TEL:"],
    [99, 155, 270, 38, "corners", '[frV_PURTC."TC004"]\n[frV_PURTC."MA003"]'],
    [98, 193, 271, 34, "corners top flag", '[frV_PURTC."MA014"][frV_PURTC."MA015"]'],
    [98, 227, 271, 20, "corners", '[frV_PURTC."MA013"]'],
    [100, 246, 270, 32, "corners", '[frV_PURTC."MA008"] [frV_PURTC."MA009"]\nFAX: [frV_PURTC."MA010"]'],
    [388, 156, 94, 26, "corners bold", "采购单号:"],
    [388, 185, 94, 21, "corners", "付款条件:"],
    [388, 208, 94, 22, "corners", "下单日期:"],
    [388, 232, 94, 19, "corners", "送货地址:"],
    [388, 256, 94, 17, "corners", "下单员:"],
    [481, 156, 222, 26, "corners bold", '[frV_PURTC."Groupfiled"]'],
    [481, 185, 222, 21, "corners", '[frV_PURTC."NA003"]'],
    [481, 208, 222, 22, "corners", '[IHDateToStr(<frV_PURTC."TC003">,\n \'-\')]'],
    [482, 232, 221, 19, "corners", '[frV_PURTC."TC021"]'],
    [484, 256, 219, 32, "corners", '[frV_PURTC."TC011C"][frV_PURTC."\nTC011"]'],
    [487, 321, 65, 15, "corners", 'C."TC005"'],
  ];

  const edges = [10, 44, 145, 345, 389, 423, 484, 548, 616, 707];
  const titles = ["序号", "物料编号", "物料名称与规格", "数量", "单位", "单价", "小计金额", "需求日", "备注"];
  const values = [
    ["center flag", '_PUR\nTD."\nTD00'],
    ["center", '[frV_PURTD."TD\n004"]'],
    ["center bold", '[frV_PURTD."TD005"]'],
    ["end bold", 'PURTD\n."TD0'],
    ["center", '_PUR\nTD."\nTD00'],
    ["end", '[frV_PUR\nTD."TD01\n0"]'],
    ["end flag", '[frV_PURT\nD."TD011"\n]'],
    ["end flag", '[frV_PURT\nD."TD012"\n]'],
    ["", '[frV_PURTD."T\nD014"]'],
  ];

  function row(top, height, cell) {
    return edges.slice(1).map(function (right, i) {
      const [classes, text] = cell(i);
      return [edges[i], top, right - edges[i] + 1, height, "frame " + classes, text];
    });
  }

  function addMemos(selector, memos) {
    const band = document.querySelector(selector);
    memos.forEach(function ([left, top, width, height, classes, text]) {
      const memo = document.createElement("div");
      memo.className = "memo " + classes;
      memo.style.cssText = `left:${left}px;top:${top}px;width:${width}px;height:${height}px`;
      const line = document.createElement("div");
      line.textContent = text;
      line.innerHTML = line.innerHTML.replace(/[\u4e00-\u9fff]+/g, '<span class="han">$&</span>');
      memo.append(line);
      band.append(memo);
    });
  }

  addMemos(".groupHeader", header);
  addMemos(".groupHeader", row(294, 42, (i) => [
    i === 3 ? "end" : i === 6 ? "center top" : "center",
    titles[i],
  ]));
  addMemos(".masterData", row(18, 35, (i) => values[i]));
  addMemos(".child", row(18, 35, (i) => [i === 0 ? "flag" : "", ""]));
})();
```
